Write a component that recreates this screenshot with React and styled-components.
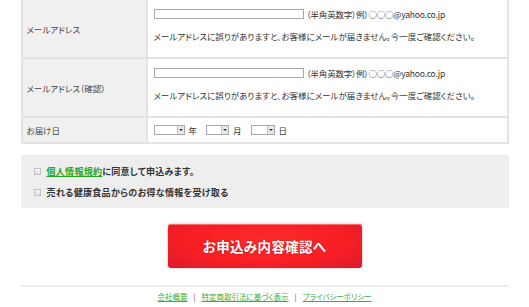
import React from 'react';
import styled, { createGlobalStyle } from 'styled-components';

const GlobalStyle = createGlobalStyle`
  body {
    margin: 0;
    background: #fff;
    font-family: "Noto Sans CJK JP", "Liberation Sans", sans-serif;
    color: #333;
    font-feature-settings: "palt";
  }
`;

const Page = styled.div`
  width: 488px;
  margin: 0 auto;
`;

const FormTable = styled.div`
  display: grid;
  grid-template-columns: 125px 1fr;
  border-left: 2px solid #e3e3e3;
  border-right: 2px solid #e3e3e3;
`;

const Label = styled.div`
  display: flex;
  align-items: center;
  padding-left: 4px;
  background: #f0f0f0;
  border-right: 2px solid #e3e3e3;
  border-bottom: 2px solid #e3e3e3;
  font-size: 8.5px;
  color: #444;
`;

const Value = styled.div`
  padding: ${p => (p.$compact ? '0 6px' : '9px 6px 15px')};
  height: ${p => (p.$compact ? '24px' : 'auto')};
  display: ${p => (p.$compact ? 'flex' : 'block')};
  align-items: center;
  border-bottom: 2px solid #e3e3e3;
  background: #fff;
`;

const InputRow = styled.div`
  display: flex;
  align-items: center;
  height: 10px;
  font-size: 8.5px;
  letter-spacing: -0.2px;
`;

const TextInput = styled.input`
  box-sizing: border-box;
  width: 150px;
  height: 10px;
  margin: 0 3px 0 0;
  padding: 0;
  border: 1px solid #a8a8a8;
  background: #fff;
`;

const Note = styled.p`
  margin: 11px 0 0;
  line-height: 12px;
  font-size: 8.5px;
`;

const SelectBox = styled.span`
  display: inline-flex;
  box-sizing: border-box;
  width: ${p => p.$w}px;
  height: 10px;
  border: 1px solid #a8a8a8;
  background: #fff;
  justify-content: flex-end;
`;

const Arrow = styled.span`
  width: 7px;
  height: 8px;
  box-sizing: border-box;
  border-left: 1px solid #c4c4c4;
  background: #e8e8e8;
  position: relative;
  &::after {
    content: '';
    position: absolute;
    left: 1px;
    top: 3px;
    border-left: 2px solid transparent;
    border-right: 2px solid transparent;
    border-top: 2px solid #333;
  }
`;

const Unit = styled.span`
  font-size: 8.5px;
  margin: 0 9px 0 4px;
`;

const AgreeBox = styled.div`
  margin-top: 11px;
  padding: 10px 13px;
  background: #eeeeee;
  display: flex;
  flex-direction: column;
  gap: 9px;
`;

const CheckRow = styled.label`
  display: flex;
  align-items: center;
  gap: 6px;
  height: 12px;
  font-size: 9px;
  font-weight: bold;
  color: #333;
  letter-spacing: 0.3px;
`;

const Check = styled.input`
  appearance: none;
  margin: 0;
  width: 7px;
  height: 7px;
  border: 1px solid #c2c2c2;
  background: linear-gradient(#f6f6f6, #dedede);
`;

const GreenLink = styled.a`
  color: ${p => (p.$bright ? '#22a822' : '#3aae3a')};
  text-decoration: underline;
`;

const ButtonRow = styled.div`
  display: flex;
  justify-content: center;
  margin-top: 16px;
`;

const SubmitButton = styled.button`
  width: 194px;
  height: 44px;
  border: none;
  border-radius: 3px;
  background: radial-gradient(ellipse at 50% 40%, #ff2b2b 0%, #f71e24 60%, #d81b2c 100%);
  box-shadow: 0 0 3px rgba(0, 0, 0, 0.25), inset 0 1px 0 #ff6a6a;
  color: #fff;
  font-family: "Noto Sans CJK JP", sans-serif;
  font-size: 13.5px;
  font-weight: bold;
  letter-spacing: 0.3px;
  text-shadow: 0 0 2px rgba(120, 0, 0, 0.5);
  cursor: pointer;
`;

const Footer = styled.footer`
  margin-top: 17px;
  border-top: 2px solid #eeeeee;
  padding-top: 4px;
  display: flex;
  justify-content: center;
  gap: 6px;
  line-height: 12px;
  font-size: 7.5px;
  color: #555;
`;

function EmailRow({ label }) {
  return (
    <>
      <Label>{label}</Label>
      <Value>
        <InputRow>
          <TextInput type="text" />
          （半角英数字）例）○○○@yahoo.co.jp
        </InputRow>
        <Note>メールアドレスに誤りがありますと、お客様にメールが届きません。今一度ご確認ください。</Note>
      </Value>
    </>
  );
}

export default function App() {
  return (
    <Page>
      <GlobalStyle />
      <FormTable>
        <EmailRow label="メールアドレス" />
        <EmailRow label="メールアドレス（確認）" />
        <Label>お届け日</Label>
        <Value $compact>
          <SelectBox $w={31}><Arrow /></SelectBox>
          <Unit>年</Unit>
          <SelectBox $w={23}><Arrow /></SelectBox>
          <Unit>月</Unit>
          <SelectBox $w={24}><Arrow /></SelectBox>
          <Unit>日</Unit>
        </Value>
      </FormTable>

      <AgreeBox>
        <CheckRow>
          <Check type="checkbox" />
          <span><GreenLink $bright href="#">個人情報規約</GreenLink>に同意して申込みます。</span>
        </CheckRow>
        <CheckRow>
          <Check type="checkbox" />
          売れる健康食品からのお得な情報を受け取る
        </CheckRow>
      </AgreeBox>

      <ButtonRow>
        <SubmitButton>お申込み内容確認へ</SubmitButton>
      </ButtonRow>

      <Footer>
        <GreenLink href="#">会社概要</GreenLink>
        <span>|</span>
        <GreenLink href="#">特定商取引法に基づく表示</GreenLink>
        <span>|</span>
        <GreenLink href="#">プライバシーポリシー</GreenLink>
      </Footer>
    </Page>
  );
}
